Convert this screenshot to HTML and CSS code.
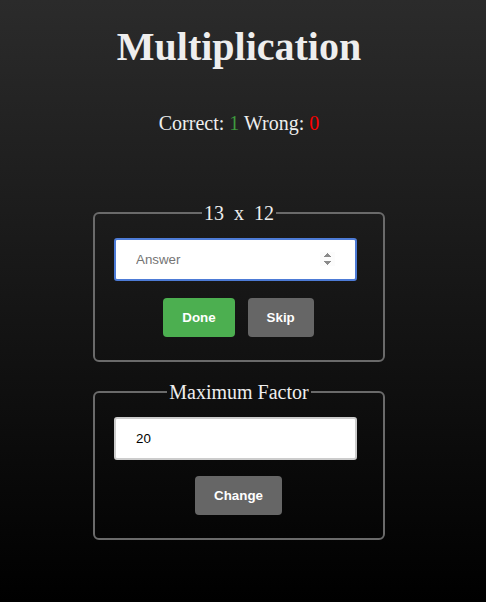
FILE: index.html
```html
<!DOCTYPE html>
<html>
<head>
<meta charset="utf-8">
<link rel="stylesheet" href="styles.css">
</head>
<body>
<main class="app">
  <h1 class="title">Multiplication</h1>
  <p class="score">Correct: <span class="ok">1</span> Wrong: <span class="bad">0</span></p>
  <fieldset class="box box-question">
    <legend class="legend">13 &nbsp;x&nbsp; 12</legend>
    <input class="field field-focus" type="number" placeholder="Answer" autofocus>
    <div class="actions">
      <button class="btn btn-done">Done</button>
      <button class="btn btn-grey">Skip</button>
    </div>
  </fieldset>
  <fieldset class="box box-max">
    <legend class="legend">Maximum Factor</legend>
    <input class="field" type="text" value="20">
    <div class="actions">
      <button class="btn btn-grey">Change</button>
    </div>
  </fieldset>
</main>
</body>
</html>
```
FILE: styles.css
```css
html, body {
  margin: 0;
  padding: 0;
  height: 100%;
}
body {
  background: linear-gradient(#2b2b2b, #000);
  color: #eee;
  font-family: "Liberation Serif", "Times New Roman", serif;
}
.app {
  display: flex;
  flex-direction: column;
  align-items: center;
  padding-top: 21px;
  padding-right: 8px;
}
.title {
  margin: 0;
  font-size: 40px;
  font-weight: bold;
  line-height: 52px;
  color: #eee;
}
.score {
  margin: 38px 0 0;
  font-size: 20px;
  line-height: 24px;
}
.ok { color: #3e9b3e; }
.bad { color: #f00; }
.box {
  box-sizing: border-box;
  width: 292px;
  margin: 0;
  border: 2px solid #6a6a6a;
  border-radius: 6px;
  padding: 13px 19px 23px 19px;
}
.box-question { margin-top: 66px; }
.box-max { margin-top: 18px; padding-bottom: 23px; }
.legend {
  padding: 0 2px;
  font-size: 20px;
  line-height: 24px;
  color: #eee;
  margin: 0 auto;
}
.field {
  display: block;
  box-sizing: border-box;
  width: 243px;
  height: 43px;
  margin: 0;
  padding: 0 20px;
  border: 2px solid #ccc;
  border-radius: 3px;
  background: #fff;
  font-family: "Liberation Sans", Arial, sans-serif;
  font-size: 13.33px;
  color: #000;
  outline: none;
}
.field::placeholder { color: #757575; }
.field-focus { border-color: #4d7bd6; }
.field-focus::-webkit-inner-spin-button {
  opacity: 1;
  background: #efefef;
}
.actions {
  display: flex;
  justify-content: center;
  gap: 13px;
  margin-top: 17px;
  padding-right: 1px;
}
.box-max .actions { margin-top: 16px; }
.btn {
  border: 0;
  border-radius: 4px;
  padding: 0 19px;
  height: 39px;
  font-family: "Liberation Sans", Arial, sans-serif;
  font-size: 13.33px;
  font-weight: bold;
  color: #fff;
}
.btn-done { background: #4caf50; }
.btn-grey { background: #666; }
```
